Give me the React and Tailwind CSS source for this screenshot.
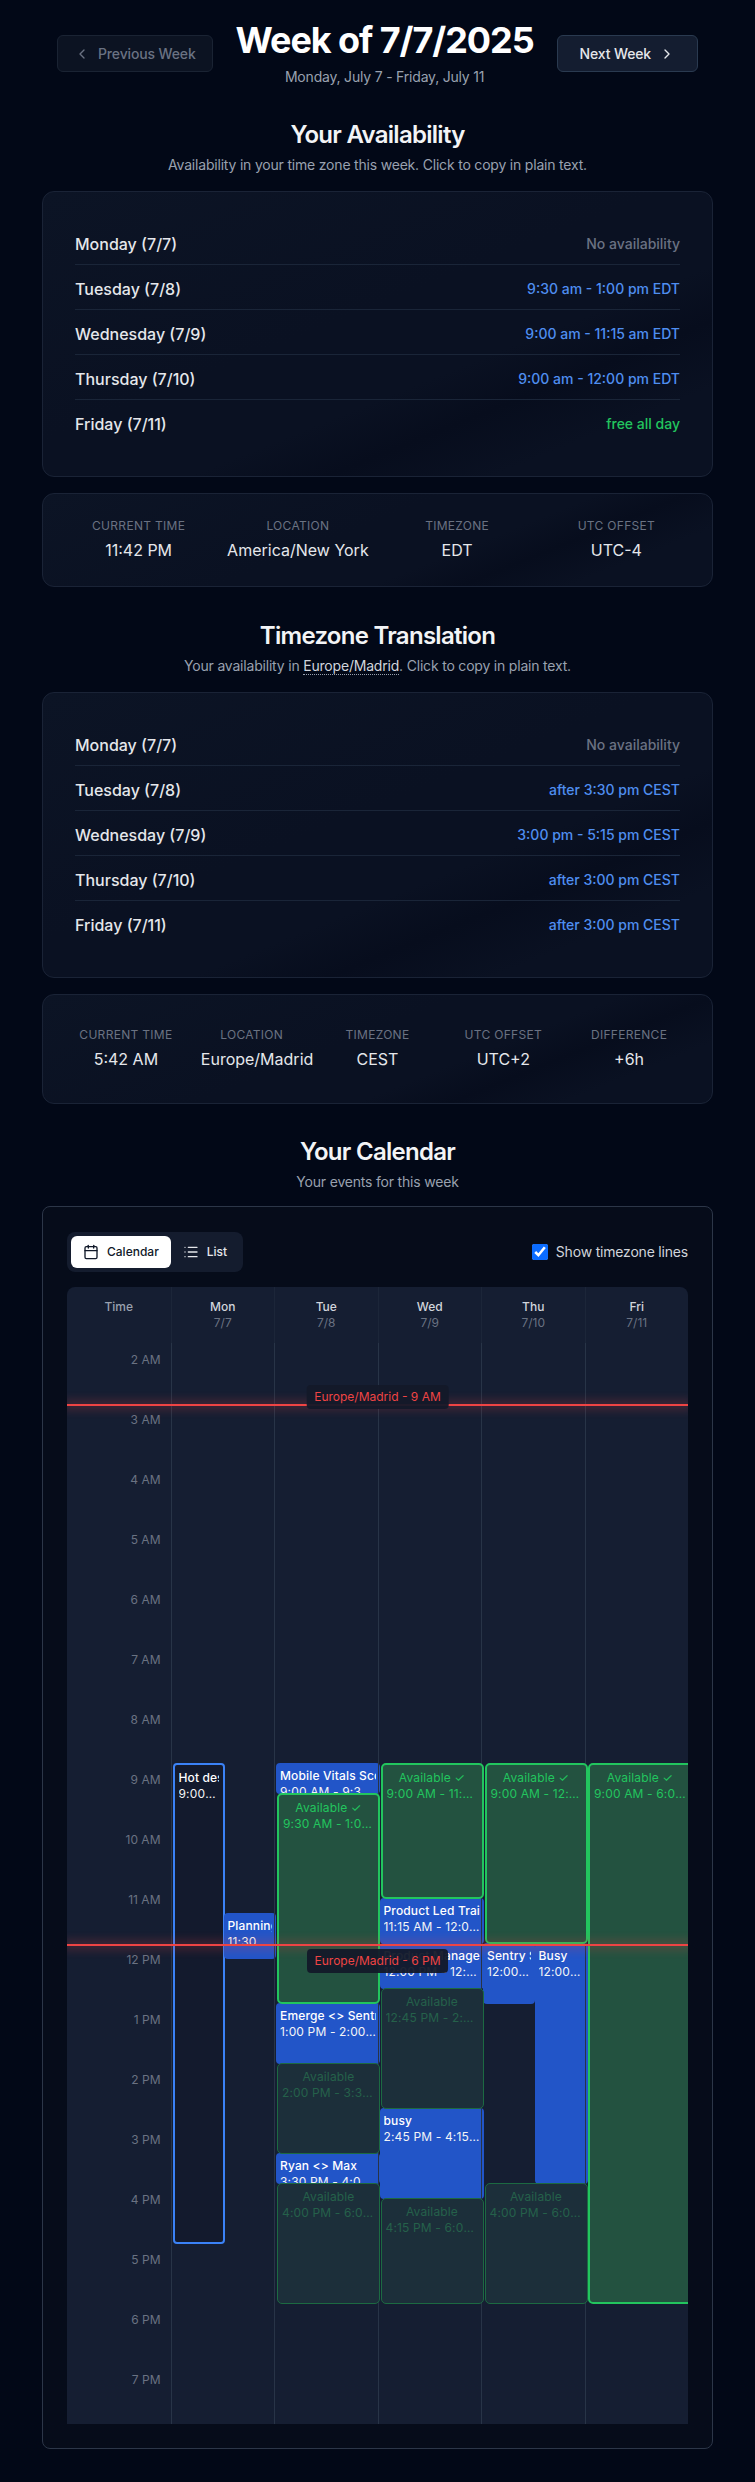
import React from 'react';
import { ChevronLeft, ChevronRight, Calendar, List } from 'lucide-react';

const HOUR_HEIGHT = 60;
const FIRST_HOUR = 2;
const HOURS = ['2 AM', '3 AM', '4 AM', '5 AM', '6 AM', '7 AM', '8 AM', '9 AM', '10 AM', '11 AM', '12 PM', '1 PM', '2 PM', '3 PM', '4 PM', '5 PM', '6 PM', '7 PM'];

const DAYS = [
  { name: 'Mon', date: '7/7' },
  { name: 'Tue', date: '7/8' },
  { name: 'Wed', date: '7/9' },
  { name: 'Thu', date: '7/10' },
  { name: 'Fri', date: '7/11' },
];

// left / width are px inside the day column, start / end are hours
const EVENTS = [
  [
    { kind: 'outline', title: 'Hot desk', time: '9:00 AM - 5:00 PM', start: 9, end: 17, left: 1, width: 52 },
    { kind: 'busy', title: 'Planning', time: '11:30 AM - 12:15 PM', start: 11.5, end: 12.25, left: 52, width: 52 },
  ],
  [
    { kind: 'busy', title: 'Mobile Vitals Scoping', time: '9:00 AM - 9:30 AM', start: 9, end: 9.5, left: 1, width: 104 },
    { kind: 'free', title: 'Available ✓', time: '9:30 AM - 1:00 PM', start: 9.5, end: 13, left: 2, width: 103 },
    { kind: 'busy', title: 'Emerge <> Sentry', time: '1:00 PM - 2:00 PM', start: 13, end: 14, left: 1, width: 104 },
    { kind: 'faded', title: 'Available', time: '2:00 PM - 3:30 PM', start: 14, end: 15.5, left: 2, width: 103 },
    { kind: 'busy', title: 'Ryan <> Max', time: '3:30 PM - 4:00 PM', start: 15.5, end: 16, left: 1, width: 104 },
    { kind: 'faded', title: 'Available', time: '4:00 PM - 6:00 PM', start: 16, end: 18, left: 2, width: 103 },
  ],
  [
    { kind: 'free', title: 'Available ✓', time: '9:00 AM - 11:15 AM', start: 9, end: 11.25, left: 2, width: 103 },
    { kind: 'busy', title: 'Product Led Training', time: '11:15 AM - 12:00 PM', start: 11.25, end: 12, left: 1, width: 104 },
    { kind: 'busy', title: 'Product Management', time: '12:00 PM - 12:45 PM', start: 12, end: 12.75, left: 1, width: 104 },
    { kind: 'faded', title: 'Available', time: '12:45 PM - 2:45 PM', start: 12.75, end: 14.75, left: 2, width: 103 },
    { kind: 'busy', title: 'busy', time: '2:45 PM - 4:15 PM', start: 14.75, end: 16.25, left: 1, width: 104 },
    { kind: 'faded', title: 'Available', time: '4:15 PM - 6:00 PM', start: 16.25, end: 18, left: 2, width: 103 },
  ],
  [
    { kind: 'free', title: 'Available ✓', time: '9:00 AM - 12:00 PM', start: 9, end: 12, left: 2.5, width: 103 },
    { kind: 'busy', title: 'Sentry Sync', time: '12:00 PM - 1:00 PM', start: 12, end: 13, left: 1, width: 52 },
    { kind: 'busy', title: 'Busy', time: '12:00 PM - 4:00 PM', start: 12, end: 16, left: 52.5, width: 53 },
    { kind: 'faded', title: 'Available', time: '4:00 PM - 6:00 PM', start: 16, end: 18, left: 2.5, width: 103 },
  ],
  [
    { kind: 'free', title: 'Available ✓', time: '9:00 AM - 6:00 PM', start: 9, end: 18, left: 2.5, width: 104 },
  ],
];

const AVAILABILITY = [
  { day: 'Monday (7/7)', value: 'No availability', tone: 'text-gray-500' },
  { day: 'Tuesday (7/8)', value: '9:30 am - 1:00 pm EDT', tone: 'text-[#4f8ef0]' },
  { day: 'Wednesday (7/9)', value: '9:00 am - 11:15 am EDT', tone: 'text-[#4f8ef0]' },
  { day: 'Thursday (7/10)', value: '9:00 am - 12:00 pm EDT', tone: 'text-[#4f8ef0]' },
  { day: 'Friday (7/11)', value: 'free all day', tone: 'text-[#22c55e]' },
];

const TRANSLATED = [
  { day: 'Monday (7/7)', value: 'No availability', tone: 'text-gray-500' },
  { day: 'Tuesday (7/8)', value: 'after 3:30 pm CEST', tone: 'text-[#4f8ef0]' },
  { day: 'Wednesday (7/9)', value: '3:00 pm - 5:15 pm CEST', tone: 'text-[#4f8ef0]' },
  { day: 'Thursday (7/10)', value: 'after 3:00 pm CEST', tone: 'text-[#4f8ef0]' },
  { day: 'Friday (7/11)', value: 'after 3:00 pm CEST', tone: 'text-[#4f8ef0]' },
];

const cardClass = 'rounded-xl border border-[#1a2336] bg-[linear-gradient(158deg,#0c1425_0%,#0a1122_45%,#0a1122_62%,#070d1d_72%,#0a1122_84%,#0a1122_100%)]';

function AvailabilityCard({ rows }) {
  return (
    <div className={`${cardClass} p-8 space-y-1`}>
      {rows.map((row, i) => (
        <div
          key={row.day}
          className={`flex justify-between items-center ${i < rows.length - 1 ? 'border-b border-[#1a2538] h-[41px]' : 'h-10'}`}
        >
          <span className="text-base font-medium text-gray-200">{row.day}</span>
          <span className={`text-sm font-medium ${row.tone}`}>{row.value}</span>
        </div>
      ))}
    </div>
  );
}

function StatsCard({ items, columns, pad, valueClass }) {
  return (
    <div className={`${cardClass} mt-4 ${pad}`}>
      <div className={columns}>
        {items.map(([label, value]) => (
          <div key={label} className="text-center">
            <div className="text-xs uppercase tracking-wide text-gray-500 mb-1">{label}</div>
            <div className={`text-base text-gray-200 whitespace-nowrap ${valueClass}`}>{value}</div>
          </div>
        ))}
      </div>
    </div>
  );
}

function CalendarEvent({ event }) {
  const style = {
    top: (event.start - FIRST_HOUR) * HOUR_HEIGHT,
    height: (event.end - event.start) * HOUR_HEIGHT + 1,
    left: event.left,
    width: event.width,
  };

  if (event.kind === 'busy' || event.kind === 'outline') {
    const box = event.kind === 'busy'
      ? 'bg-[#2255c8] rounded-[4px] px-1 py-[5px]'
      : 'bg-[#131a2d] border-2 border-[#3b82f6] rounded-[4px] px-1 py-[5px]';
    return (
      <div className={`absolute overflow-hidden text-xs tracking-[0.012em] text-white ${box}`} style={style}>
        <div className="font-medium whitespace-nowrap overflow-hidden">{event.title}</div>
        <div className="truncate text-gray-100">{event.time}</div>
      </div>
    );
  }

  const box = event.kind === 'free'
    ? 'bg-[#235240] border-2 border-[#22c55e] text-[#22c55e] py-[5px] z-[2]'
    : 'bg-[#1c2f3a] border border-[#1c6a42] text-[#25614a] py-[5px] z-[1]';
  return (
    <div className={`absolute overflow-hidden rounded-[5px] px-1 text-xs tracking-[0.012em] text-center ${box}`} style={style}>
      <div className="whitespace-nowrap overflow-hidden">{event.title}</div>
      <div className="truncate">{event.time}</div>
    </div>
  );
}

function TimezoneLine({ hour, label, labelOffset }) {
  const top = (hour - FIRST_HOUR) * HOUR_HEIGHT + 1;
  return (
    <>
      <div
        className="absolute left-0 right-0 h-0.5 bg-[#ef4444] shadow-[0_0_10px_4px_rgba(239,68,68,0.22)] z-20"
        style={{ top }}
      />
      <div
        className="absolute left-1/2 -translate-x-1/2 z-30 h-6 flex items-center px-2 rounded bg-[#131929]/95 text-xs text-[#ef4444] whitespace-nowrap"
        style={{ top: top + labelOffset }}
      >
        {label}
      </div>
    </>
  );
}

function CalendarGrid() {
  return (
    <div className="mt-[15px] rounded-t-lg bg-[#151e32]">
      <div className="grid grid-cols-6 h-14">
        <div className="py-3 text-center text-xs font-medium text-gray-400">Time</div>
        {DAYS.map((day) => (
          <div key={day.name} className="py-3 text-center text-xs border-l border-[#1c2639]">
            <div className="font-medium text-gray-300">{day.name}</div>
            <div className="text-gray-500">{day.date}</div>
          </div>
        ))}
      </div>
      <div className="relative grid grid-cols-6 h-[1081px] overflow-hidden">
        <div>
          {HOURS.map((hour) => (
            <div key={hour} className="h-[60px] pt-[9px] pr-2.5 text-right text-xs text-gray-500">{hour}</div>
          ))}
        </div>
        {EVENTS.map((events, i) => (
          <div key={DAYS[i].name} className="relative border-l border-[#283447]">
            {events.map((event) => (
              <CalendarEvent key={event.title + event.time} event={event} />
            ))}
          </div>
        ))}
        <TimezoneLine hour={3} label="Europe/Madrid - 9 AM" labelOffset={-19} />
        <TimezoneLine hour={12} label="Europe/Madrid - 6 PM" labelOffset={5} />
      </div>
    </div>
  );
}

export default function App() {
  return (
    <div className="min-h-screen bg-[#020817] font-['Inter',sans-serif] pt-5 pb-8">
      <div className="w-[671px] mx-auto">
        <div className="flex items-center justify-between px-[15px] mb-8">
          <button className="flex items-center gap-2 h-[37px] px-4 rounded-md border border-[#1a2333] bg-[#0c1322] text-sm font-medium tracking-[-0.01em] text-gray-500">
            <ChevronLeft size={16} />
            Previous Week
          </button>
          <div className="text-center">
            <h1 className="text-4xl font-bold tracking-[-0.03em] text-white">Week of 7/7/2025</h1>
            <p className="mt-[7px] text-sm tracking-[-0.014em] text-gray-400">Monday, July 7 - Friday, July 11</p>
          </div>
          <button className="flex items-center gap-2 h-[37px] px-[22px] rounded-md border border-[#2a3a50] bg-[#141d30] text-sm font-medium tracking-[-0.01em] text-gray-200">
            Next Week
            <ChevronRight size={16} />
          </button>
        </div>

        <div className="text-center mb-4">
          <h2 className="text-2xl font-semibold tracking-[-0.03em] text-gray-100">Your Availability</h2>
          <p className="mt-1 text-sm tracking-[-0.014em] text-gray-400">Availability in your time zone this week. Click to copy in plain text.</p>
        </div>
        <AvailabilityCard rows={AVAILABILITY} />
        <StatsCard
          columns="grid grid-cols-4 gap-8"
          pad="px-8 py-6"
          valueClass="flex justify-center"
          items={[['Current Time', '11:42 PM'], ['Location', 'America/New York'], ['Timezone', 'EDT'], ['UTC Offset', 'UTC-4']]}
        />

        <div className="text-center mt-[33px] mb-4">
          <h2 className="text-2xl font-semibold tracking-[-0.03em] text-gray-100">Timezone Translation</h2>
          <p className="mt-1 text-sm tracking-[-0.014em] text-gray-400">
            Your availability in <span className="text-gray-300 border-b border-dotted border-gray-400">Europe/Madrid</span>. Click to copy in plain text.
          </p>
        </div>
        <AvailabilityCard rows={TRANSLATED} />
        <StatsCard
          columns="grid grid-cols-5 gap-6"
          pad="p-8"
          valueClass=""
          items={[['Current Time', '5:42 AM'], ['Location', 'Europe/Madrid'], ['Timezone', 'CEST'], ['UTC Offset', 'UTC+2'], ['Difference', '+6h']]}
        />

        <div className="text-center mt-8 mb-[14px]">
          <h2 className="text-2xl font-semibold tracking-[-0.03em] text-gray-100">Your Calendar</h2>
          <p className="mt-1 text-sm tracking-[-0.014em] text-gray-400">Your events for this week</p>
        </div>
        <div className="rounded-lg border border-[#2c3648] bg-[#060c1a] px-6 pt-[25px] pb-6">
          <div className="flex items-center justify-between">
            <div className="flex p-1 rounded-lg bg-[#141c2e]">
              <button className="flex items-center gap-2 h-8 px-3 rounded-md bg-white text-xs font-medium text-gray-900">
                <Calendar size={16} />
                Calendar
              </button>
              <button className="flex items-center gap-2 h-8 px-3 rounded-md text-xs font-medium text-gray-200">
                <List size={16} />
                List
              </button>
            </div>
            <label className="flex items-center gap-2 text-sm tracking-[-0.014em] text-gray-300">
              <input type="checkbox" defaultChecked className="w-4 h-4 accent-[#0b6cff]" />
              Show timezone lines
            </label>
          </div>
          <CalendarGrid />
        </div>
      </div>
    </div>
  );
}
